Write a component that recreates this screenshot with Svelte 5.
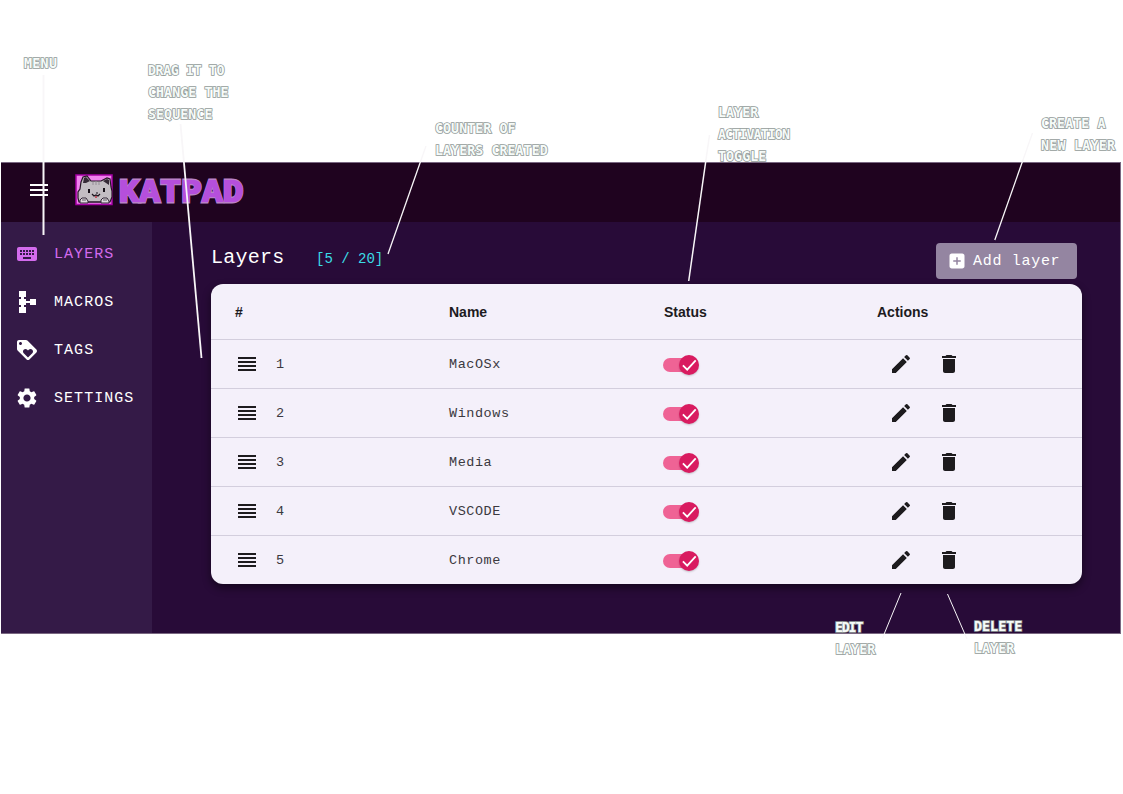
<script>
  const rows = ['MacOSx', 'Windows', 'Media', 'VSCODE', 'Chrome'];
  const nav = [
    { label: 'LAYERS', d: 'M20 5H4c-1.100 0-1.990.9-1.990 2L2 17c0 1.100.9 2 2 2h16c1.100 0 2-.9 2-2V7c0-1.100-.9-2-2-2zm-9 3h2v2h-2V8zm0 3h2v2h-2v-2zM8 8h2v2H8V8zm0 3h2v2H8v-2zm-1 2H5v-2h2v2zm0-3H5V8h2v2zm9 7H8v-2h8v2zm0-4h-2v-2h2v2zm0-3h-2V8h2v2zm3 3h-2v-2h2v2zm0-3h-2V8h2v2z' },
    { label: 'MACROS', d: 'M4 1h7v6H9v2h2v2h4V9h6v6h-6v-2h-4v2H9v2h2v6H4v-6h2v-2H4V9h2V7H4z' },
    { label: 'TAGS', d: 'M21.410 11.580l-9-9C12.050 2.220 11.550 2 11 2H4c-1.100 0-2 .9-2 2v7c0 .55.22 1.050.59 1.420l9 9c.36.36.86.58 1.410.58s1.050-.22 1.410-.59l7-7c.37-.36.59-.86.59-1.410s-.23-1.060-.59-1.420zM5.500 7C4.670 7 4 6.330 4 5.500S4.670 4 5.500 4 7 4.670 7 5.500 6.330 7 5.500 7zm11.770 8.270L13 19.540l-4.270-4.270C8.280 14.810 8 14.190 8 13.500c0-1.380 1.120-2.500 2.500-2.500.69 0 1.320.28 1.770.74l.73.72.73-.73c.45-.45 1.080-.73 1.770-.73 1.380 0 2.500 1.120 2.500 2.500 0 .69-.28 1.320-.73 1.770z' },
    { label: 'SETTINGS', d: 'M19.140 12.940c.04-.3.06-.61.06-.94 0-.32-.02-.64-.07-.94l2.030-1.580c.18-.14.23-.41.12-.61l-1.920-3.320c-.12-.22-.37-.29-.59-.22l-2.390.96c-.5-.38-1.030-.7-1.620-.94l-.36-2.540c-.04-.24-.24-.41-.48-.41h-3.840c-.24 0-.43.17-.47.41l-.36 2.540c-.59.24-1.130.57-1.620.94l-2.390-.96c-.22-.08-.47 0-.59.22L2.740 8.870c-.12.21-.08.47.12.61l2.030 1.580c-.05.3-.09.63-.09.94s.02.64.07.94l-2.030 1.580c-.18.14-.23.41-.12.61l1.920 3.320c.12.22.37.29.59.22l2.390-.96c.5.38 1.030.7 1.620.94l.36 2.540c.05.24.24.41.48.41h3.840c.24 0 .44-.17.47-.41l.36-2.540c.59-.24 1.130-.56 1.620-.94l2.390.96c.22.08.47 0 .59-.22l1.920-3.320c.12-.22.07-.47-.12-.61l-2.010-1.580zM12 15.600c-1.980 0-3.600-1.620-3.600-3.600s1.620-3.600 3.600-3.600 3.600 1.620 3.600 3.600-1.620 3.600-3.600 3.600z' }
  ];
  const notes = [
    { x: 24, y: 53, lines: ['MENU'] },
    { x: 148, y: 60, lines: ['DRAG IT TO', 'CHANGE THE', 'SEQUENCE'] },
    { x: 435, y: 118, lines: ['COUNTER OF', 'LAYERS CREATED'] },
    { x: 718, y: 102, lines: ['LAYER', 'ACTIVATION', 'TOGGLE'] },
    { x: 1041, y: 113, lines: ['CREATE A', 'NEW LAYER'] },
    { x: 835, y: 617, lines: ['EDIT', 'LAYER'] },
    { x: 974, y: 616, lines: ['DELETE', 'LAYER'] }
  ];
  const spacing = { EDIT: -1.2, ACTIVATION: -0.9, 'DRAG IT TO': -0.4, MENU: 0.3, 'NEW LAYER': 0.25 };
  const pointers = [
    [43.5, 75, 43.5, 235, 2], [180.500, 124, 201.500, 358, 1.800], [426, 146, 388, 254, 1.300], [709.500, 135, 688.700, 281, 1.500],
    [1032.500, 133, 994.800, 240, 1.300], [901, 593, 882.500, 638, 1], [947.500, 594, 967, 639, 1]
  ];
</script>

<main>
  <section class="app">
    <header>
      <svg class="burger" viewBox="0 0 24 24"><path d="M3 18h18v-2H3v2zm0-5h18v-2H3v2zm0-7v2h18V6H3z" /></svg>
      <svg class="cat" viewBox="0 0 38 32">
        <rect x="1" y="1" width="36" height="29.500" fill="#f083ee" stroke="#a600a5" stroke-width="1.500" />
        <path d="M4 28l-1-4v-6l2-3 1-7 2-5 4-1 4 5h10l6-3 3 1 1 8 1 4v6l-2 5z" fill="#c3bdc3" stroke="#261526" stroke-width="1.200" />
        <path d="M8 9l1-5 2-1 4 4-4 2zM28 7l4-2 2 1v5z" fill="#352936" />
        <path d="M18 8v3M21 7v4M24 8v3" stroke="#958d96" />
        <path d="M14 15v4M29 14v4" stroke="#171018" stroke-width="2" />
        <path d="M17 20l2 2 2-1 2 1 2-2M21 19h2" fill="none" stroke="#1d141e" stroke-width="1.200" />
        <path d="M20 23h2" stroke="#c53345" stroke-width="1.300" />
        <path d="M11 28h16" stroke="#37293a" stroke-width="1.300" />
        <path d="M5 29v-3l2-2h4l2 3v2zM26 29v-3l2-2h4l2 3v2z" fill="#ded9de" stroke="#302434" />
        <path d="M8 25v2M10 25v2M29 25v2M31 25v2" stroke="#655c66" />
      </svg>
      <span class="brand">KATPAD</span>
    </header>
    <div class="body">
      <nav>
        {#each nav as item, i}
          <div class="item" class:active={i === 0}>
            <svg viewBox="0 0 24 24"><path d={item.d} /></svg><span>{item.label}</span>
          </div>
        {/each}
      </nav>
      <div class="content">
        <div class="top">
          <h1>Layers</h1><span class="count">[5 / 20]</span>
          <button><svg viewBox="0 0 24 24"><path d="M19 2H5c-1.700 0-3 1.300-3 3v14c0 1.700 1.300 3 3 3h14c1.700 0 3-1.300 3-3V5c0-1.700-1.300-3-3-3zm-2 11h-4v4h-2v-4H7v-2h4V7h2v4h4v2z" /></svg>Add layer</button>
        </div>
        <div class="table">
          <div class="row head"><span>#</span><span>Name</span><span>Status</span><span>Actions</span></div>
          {#each rows as name, i}
            <div class="row">
              <span class="num"><svg viewBox="0 0 24 24"><path d="M3 5h18v2H3zM3 9h18v2H3zM3 13h18v2H3zM3 17h18v2H3z" /></svg><span>{i + 1}</span></span>
              <span class="name">{name}</span>
              <span><i class="switch"><i class="thumb"><svg viewBox="0 0 20 20"><path d="M16.700 5.300l-8.500 9.300-4.300-4.300" /></svg></i></i></span>
              <span class="actions">
                <svg viewBox="0 0 24 24"><path d="M3 17.250V21h3.750L17.810 9.940l-3.750-3.750L3 17.250zM20.710 7.040c.39-.39.39-1.020 0-1.410l-2.340-2.340a.996.996 0 0 0-1.410 0l-1.830 1.830 3.750 3.750 1.830-1.830z" /></svg>
                <svg viewBox="0 0 24 24"><path d="M6 19c0 1.100.9 2 2 2h8c1.100 0 2-.9 2-2V7H6v12zM19 4h-3.500l-1-1h-5l-1 1H5v2h14V4z" /></svg>
              </span>
            </div>
          {/each}
        </div>
      </div>
    </div>
  </section>

  <svg class="pointers" viewBox="0 0 1123 794">
    {#each pointers as [x1, y1, x2, y2, w]}
      <line {x1} {y1} {x2} {y2} stroke-width={w} />
    {/each}
  </svg>
  {#each notes as note}
    <div class="note" style="left:{note.x}px;top:{note.y}px">
      {#each note.lines as line}<div style="letter-spacing:{spacing[line] ?? 0.05}px">{line}</div>{/each}
    </div>
  {/each}
</main>

<style>
  :global(body) { margin: 0; background: #fff; }
  main { position: relative; box-sizing: border-box; width: 1123px; height: 794px; padding: 162px 2px 0 1px; overflow: hidden; font-family: "Liberation Mono", monospace; }
  svg { fill: currentColor; flex: none; }
  .app { box-sizing: border-box; height: 472px; border: 1px solid #796781; border-width: 1px 1px 1px 0; background: #280b38; color: #fff; display: flex; flex-direction: column; box-shadow: inset 1px 0 #796781; }
  header { height: 59px; flex: none; background: #1f031f; display: flex; align-items: center; padding-left: 26px; box-sizing: border-box; }
  .burger { width: 24px; height: 24px; margin-top: -6px; }
  .cat { width: 38px; height: 32px; margin: -6px 0 0 24px; }
  .brand { font-size: 33.500px; line-height: 40px; font-weight: 700; letter-spacing: .7px; color: #b54fdc; -webkit-text-stroke: 3px #b982c8; paint-order: stroke fill; text-shadow: 1px 0 #b54fdc, -1px 0 #b54fdc; margin: 0 0 0 6px; }
  .body { display: flex; flex: 1; min-height: 0; }
  nav { width: 151px; box-sizing: border-box; background: #341a47; padding-top: 8px; }
  .item { height: 48px; display: flex; align-items: center; padding-left: 14px; font-size: 15px; letter-spacing: 1.050px; }
  .item svg { width: 24px; height: 24px; margin-right: 15px; }
  .item.active { color: #d36bed; }
  .content { flex: 1; padding: 21px 38px 0 59px; }
  .top { display: flex; height: 41px; align-items: flex-start; }
  h1 { font: 400 20px/30px "Liberation Mono", monospace; letter-spacing: .25px; margin: 0; width: 105px; }
  .count { font-size: 14px; line-height: 32px; color: #3bdce6; letter-spacing: 0; }
  button { margin: 0 5px 0 auto; width: 141px; height: 36px; box-sizing: border-box; border: 0; border-radius: 4px; background: #9485a1; color: #fff; display: flex; align-items: center; padding: 0 0 0 12px; font: 15px "Liberation Mono", monospace; letter-spacing: .7px; white-space: nowrap; }
  button svg { width: 18px; height: 18px; margin-right: 7px; }
  .table { height: 300px; box-sizing: border-box; border-radius: 12px; overflow: hidden; background: #f4f0fa; color: #1d1b1e; box-shadow: 0 4px 8px #0007; }
  .row { height: 49px; box-sizing: border-box; border-top: 1px solid #d3cedd; display: grid; grid-template-columns: 214px 215px 213px 1fr; padding-left: 24px; align-items: center; font-size: 13.500px; letter-spacing: .55px; }
  .row.head { height: 55px; border: 0; font: 700 14px "Liberation Sans", sans-serif; letter-spacing: 0; }
  .num { display: flex; align-items: center; gap: 17px; }
  .num span, .name { color: #3b393f; }
  .num svg { width: 24px; height: 24px; }
  .switch { display: block; width: 30px; height: 14px; border-radius: 7px; background: #ef6395; margin: 2px 0 0 -1px; position: relative; }
  .thumb { position: absolute; right: -6px; top: -3px; width: 20px; height: 20px; border-radius: 50%; background: #d91b60; box-shadow: 0 1px 2px #0003; }
  .thumb svg { display: block; width: 20px; height: 20px; fill: none; stroke: #fff; stroke-width: 1.800; }
  .actions { display: flex; gap: 24px; padding-left: 11.500px; }
  .actions svg { width: 24px; height: 24px; }
  .pointers { position: absolute; inset: 0; width: 1123px; height: 794px; }
  .pointers line { stroke: #f8f6f8; }
  .note { position: absolute; font: 700 13.300px/22px "DejaVu Sans Mono", monospace; color: #f6fbf9; white-space: pre; -webkit-text-stroke: 1.600px #929b99; paint-order: stroke fill; }
</style>
